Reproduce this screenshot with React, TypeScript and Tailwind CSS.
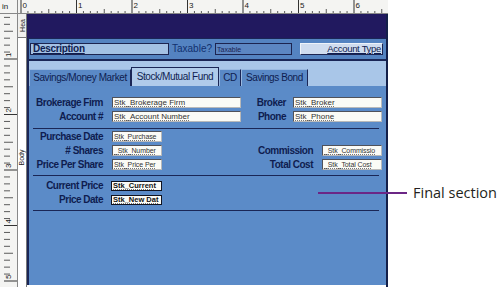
import React from "react";

const PX_PER_INCH = 55.5;

function TopRuler() {
  const ticks: React.ReactNode[] = [];
  for (let i = 0; i <= 6 * 8 + 5; i++) {
    const x = 3 + (i * PX_PER_INCH) / 8;
    if (x > 370) break;
    const major = i % 8 === 0;
    const half = i % 4 === 0;
    const h = major ? 14 : half ? 5 : 3;
    ticks.push(<line key={i} x1={x} x2={x} y1={14 - h} y2={14} stroke="#333" strokeWidth={major ? 1 : 0.8} />);
    if (major) {
      ticks.push(
        <text key={`n${i}`} x={x + 1.5} y={8} fontSize={8} fill="#222" fontFamily="Liberation Sans, sans-serif">
          {i / 8}
        </text>
      );
    }
  }
  return (
    <svg width={370} height={14} className="block bg-[#f4f4f2]">
      {ticks}
      <line x1={0} x2={370} y1={13.5} y2={13.5} stroke="#888" />
    </svg>
  );
}

function SideRuler() {
  const ticks: React.ReactNode[] = [];
  for (let i = 0; i <= 5 * 8 + 2; i++) {
    const y = -10.5 + (i * PX_PER_INCH) / 8;
    if (y < 0 || y > 273) continue;
    const major = i % 8 === 0;
    const half = i % 4 === 0;
    const w = major ? 18 : half ? 9 : 6;
    ticks.push(<line key={i} x1={4} x2={4 + w} y1={y} y2={y} stroke="#333" strokeWidth={major ? 1 : 0.8} />);
    if (major) {
      ticks.push(
        <text
          key={`n${i}`}
          x={0}
          y={0}
          fontSize={8}
          fill="#222"
          fontFamily="Liberation Sans, sans-serif"
          transform={`translate(11 ${y - 2}) rotate(-90)`}
        >
          {i / 8}
        </text>
      );
    }
  }
  return (
    <svg width={18} height={273} className="block bg-[#f4f4f2]">
      {ticks}
      <line x1={17.5} x2={17.5} y1={0} y2={273} stroke="#888" />
    </svg>
  );
}

function Field({ w, text, bold, small }: { w: string; text: string; bold?: boolean; small?: boolean }) {
  const size = bold ? "text-[7.5px] font-bold" : small ? "text-[7px] tracking-[-0.1px]" : "text-[8px]";
  return (
    <div
      className={`${w} h-full flex items-center overflow-hidden whitespace-nowrap bg-[#fbfbf6] px-[1px] ${size} ${
        bold
          ? "border-[1.5px] border-[#101320] text-[#111]"
          : "border border-[#50525a] border-b-[#b9b9b9] border-r-[#b9b9b9] text-[#333]"
      }`}
    >
      <span className="underline decoration-dotted decoration-[#777] underline-offset-1 leading-none">{text}</span>
    </div>
  );
}

function Label({ text, w }: { text: string; w: string }) {
  return (
    <div className={`${w} text-right text-[10px] font-bold tracking-[-0.5px] leading-none text-[#0f1d50]`}>{text}</div>
  );
}

function Rule() {
  return <div className="ml-[4px] mr-[3px] h-px bg-[#1a2656]" />;
}

const tabs = [
  { name: "Savings/Money Market", w: "w-[102px]", active: false },
  { name: "Stock/Mutual Fund", w: "w-[88px]", active: true },
  { name: "CD", w: "w-[22px]", active: false },
  { name: "Savings Bond", w: "w-[67px]", active: false },
];

export default function App() {
  return (
    <div className="relative w-[500px] h-[287px] overflow-hidden bg-white font-['Liberation_Sans',Arial,sans-serif]">
      <div className="flex flex-col w-[388px] h-full">
        <div className="flex h-[14px]">
          <div className="w-[18px] h-[14px] bg-[#f4f4f2] border-r border-b border-[#888] text-[8px] leading-[13px] pl-[2px] text-[#222]">
            in
          </div>
          <TopRuler />
        </div>

        <div className="flex flex-1 min-h-0">
          <SideRuler />

          <div className="w-[9px] flex flex-col bg-white border-r border-[#777]">
            <div className="h-[24px] border-b border-[#777] bg-[#f0f0ee] flex items-center justify-center">
              <span className="-rotate-90 text-[7px] leading-none text-[#222] whitespace-nowrap">Hea</span>
            </div>
            <div className="flex-1 flex items-start justify-center pt-[116px]">
              <span className="-rotate-90 text-[7px] leading-none text-[#222] whitespace-nowrap">Body</span>
            </div>
          </div>

          <div className="w-[361px] flex flex-col border-r-2 border-[#14204a] pb-[2px]">
            <div className="h-[24px] bg-[#21195f]" />

            <div className="h-[23px] flex items-center bg-[#5483c1] border-t border-b-2 border-[#1a2656] border-l-2 pl-[1px]">
              <div className="w-[139px] h-[12px] bg-[#a3c1e4] border border-[#1c2450] px-[2px] flex items-center">
                <span className="text-[10px] font-bold tracking-[-0.3px] leading-none text-[#0f1d50] underline underline-offset-1">
                  Description
                </span>
              </div>
              <span className="ml-[3px] text-[10px] leading-none text-[#12306e]">Taxable?</span>
              <div className="ml-[3px] w-[77px] h-[12px] bg-[#5c86c2] border border-[#1c2450] px-[1px] flex items-center">
                <span className="text-[7px] leading-none text-[#1b2452]">Taxable</span>
              </div>
              <div className="ml-[8px] w-[83px] h-[12px] bg-[#cfdcef] border border-[#1c2450] border-t-[#eef3fa] border-l-[#eef3fa] px-[1px] flex items-center justify-end">
                <span className="text-[9.5px] leading-none text-[#0f1d50] underline underline-offset-1 tracking-[-0.3px]">
                  Account Type
                </span>
              </div>
            </div>

            <div className="h-[25px] bg-[#a9c6e8] flex items-end border-l-2 border-[#1a2656]">
              {tabs.map((t) => (
                <div
                  key={t.name}
                  className={`${t.w} ${
                    t.active ? "h-[19px] bg-[#b0cbea]" : "h-[17px] bg-[#5a89c6] border-t-[#9ab9e0] border-l-[#9ab9e0]"
                  } border border-b-0 border-[#1a2656] flex items-center justify-center text-[10px] tracking-[-0.4px] leading-none text-[#0f1d50] whitespace-nowrap`}
                >
                  {t.name}
                </div>
              ))}
            </div>

            <div className="flex-1 flex flex-col bg-[#5b8bc8] border-l-2 border-[#1a2656] pr-[4px]">
              <div className="mt-[11px] flex flex-col gap-[3px]">
                <div className="flex items-center h-[11px]">
                  <Label w="w-[74px]" text="Brokerage Firm" />
                  <div className="ml-[9px] h-full flex">
                    <Field w="w-[129px]" text="Stk_Brokerage Firm" />
                  </div>
                  <div className="flex-1 flex justify-end">
                    <Label w="w-auto" text="Broker" />
                  </div>
                  <div className="ml-[7px] h-full flex">
                    <Field w="w-[89px]" text="Stk_Broker" />
                  </div>
                </div>
                <div className="flex items-center h-[11px]">
                  <Label w="w-[74px]" text="Account #" />
                  <div className="ml-[9px] h-full flex">
                    <Field w="w-[129px]" text="Stk_Account Number" />
                  </div>
                  <div className="flex-1 flex justify-end">
                    <Label w="w-auto" text="Phone" />
                  </div>
                  <div className="ml-[7px] h-full flex">
                    <Field w="w-[89px]" text="Stk_Phone" />
                  </div>
                </div>
              </div>

              <div className="mt-[6px]">
                <Rule />
              </div>

              <div className="mt-[2px] flex flex-col gap-[3px]">
                <div className="flex items-center h-[11px]">
                  <Label w="w-[74px]" text="Purchase Date" />
                  <div className="ml-[9px] h-full flex">
                    <Field w="w-[50px]" text="Stk_Purchase" small />
                  </div>
                </div>
                <div className="flex items-center h-[11px]">
                  <Label w="w-[74px]" text="# Shares" />
                  <div className="ml-[9px] h-full flex">
                    <Field w="w-[50px]" text="_Stk_Number" small />
                  </div>
                  <div className="flex-1 flex justify-end">
                    <Label w="w-auto" text="Commission" />
                  </div>
                  <div className="ml-[9px] h-full flex">
                    <Field w="w-[60px]" text="_Stk_Commissio" small />
                  </div>
                </div>
                <div className="flex items-center h-[11px]">
                  <Label w="w-[74px]" text="Price Per Share" />
                  <div className="ml-[9px] h-full flex">
                    <Field w="w-[50px]" text="Stk_Price Per" small />
                  </div>
                  <div className="flex-1 flex justify-end">
                    <Label w="w-auto" text="Total Cost" />
                  </div>
                  <div className="ml-[9px] h-full flex">
                    <Field w="w-[60px]" text="_Stk_Total Cost" small />
                  </div>
                </div>
              </div>

              <div className="mt-[5px]">
                <Rule />
              </div>

              <div className="mt-[5px] flex flex-col gap-[4px]">
                <div className="flex items-center h-[10px]">
                  <Label w="w-[74px]" text="Current Price" />
                  <div className="ml-[8px] h-full flex">
                    <Field w="w-[51px]" text="Stk_Current" bold />
                  </div>
                </div>
                <div className="flex items-center h-[10px]">
                  <Label w="w-[74px]" text="Price Date" />
                  <div className="ml-[8px] h-full flex">
                    <Field w="w-[51px]" text="Stk_New Dat" bold />
                  </div>
                </div>
              </div>

              <div className="mt-[5px]">
                <Rule />
              </div>
            </div>
          </div>
        </div>
      </div>

      <div className="absolute left-[318px] top-[192px] w-[89px] h-[2px] bg-[#6b2686]" />
      <div className="absolute left-[413px] top-[183px] text-[14.5px] leading-[20px] text-[#231f20] whitespace-nowrap font-['Open_Sans',sans-serif]">
        Final section
      </div>
    </div>
  );
}
